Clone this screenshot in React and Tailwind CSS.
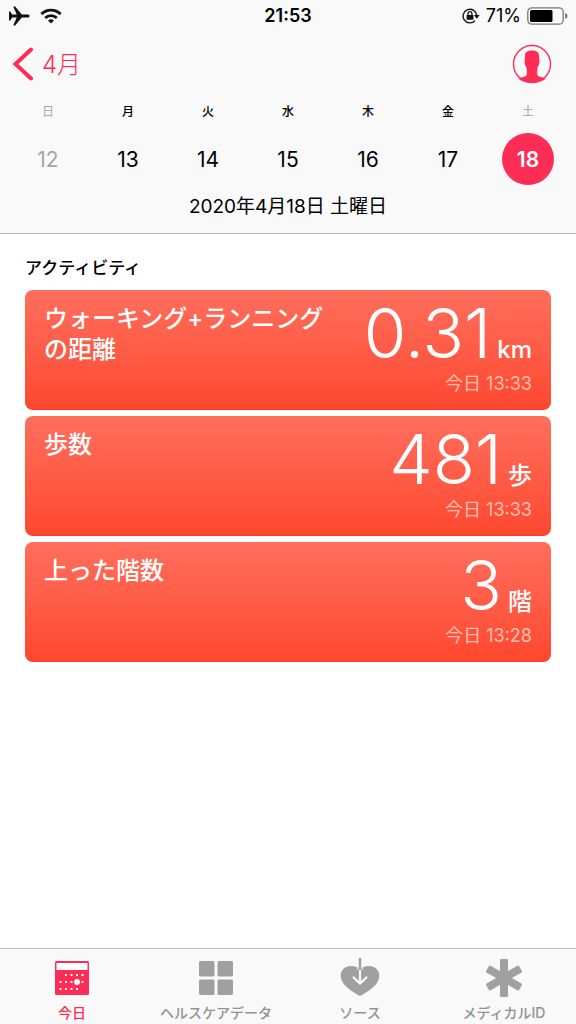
import clsx from "clsx";

const days = [
  { name: "日", date: 12, weekend: true },
  { name: "月", date: 13 },
  { name: "火", date: 14 },
  { name: "水", date: 15 },
  { name: "木", date: 16 },
  { name: "金", date: 17 },
  { name: "土", date: 18, weekend: true, selected: true },
];

const activities = [
  { title: "ウォーキング+ランニングの距離", value: "0.31", unit: "km", time: "今日 13:33" },
  { title: "歩数", value: "481", unit: "歩", time: "今日 13:33" },
  { title: "上った階数", value: "3", unit: "階", time: "今日 13:28" },
];

const tabs = [
  { label: "今日", icon: CalendarIcon, active: true },
  { label: "ヘルスケアデータ", icon: GridIcon },
  { label: "ソース", icon: SourceIcon },
  { label: "メディカルID", icon: AsteriskIcon },
];

function AirplaneIcon() {
  return (
    <svg width="22" height="20" viewBox="0 0 22 20" aria-hidden="true">
      <path
        fill="#111"
        d="M1 5.5h1.2l2 2.900h4.500L5.200.5h1.900l6.700 7.900h6c1 0 1.800.8 1.800 1.600s-.8 1.600-1.800 1.600h-6l-6.700 7.900H5.200l3.500-7.900H4.200l-2 2.900H1z"
      />
    </svg>
  );
}

function WifiIcon() {
  return (
    <svg width="22" height="16" viewBox="0 0 22 16" fill="none" stroke="#111" strokeWidth="2.900" aria-hidden="true">
      <path d="M1.400 6.100a13.600 13.600 0 0 1 19.200 0" />
      <path d="M5.200 10a8.200 8.200 0 0 1 11.600 0" />
      <path d="M11 15.600 8 12.600a4.300 4.300 0 0 1 6 0z" fill="#111" stroke="none" />
    </svg>
  );
}

function RotationLockIcon() {
  return (
    <svg width="18" height="16" viewBox="0 0 18 16" fill="none" stroke="#111" strokeWidth="1.400" aria-hidden="true">
      <path d="M13 12.600A6.800 6.800 0 1 1 14.700 7.600" />
      <path d="M12 7h5.600l-2.800 3.800z" fill="#111" stroke="none" />
      <rect x="4.600" y="7" width="6.800" height="4.800" rx=".6" fill="#111" stroke="none" />
      <path d="M6.100 7.400V5.600a1.900 1.900 0 0 1 3.800 0v1.800" strokeWidth="1.300" />
    </svg>
  );
}

function BatteryIcon() {
  return (
    <svg width="41" height="18" viewBox="0 0 41 18" aria-hidden="true">
      <rect x=".8" y=".8" width="35.400" height="16.400" rx="4" fill="none" stroke="#777" strokeWidth="1.300" />
      <rect x="3" y="3" width="22.500" height="12" rx="1.500" fill="#000" />
      <path d="M38.200 6c1.500.5 2.300 1.600 2.300 3s-.8 2.500-2.300 3z" fill="#777" />
    </svg>
  );
}

function ProfileIcon() {
  return (
    <svg width="40" height="40" viewBox="0 0 40 40" aria-hidden="true">
      <circle cx="20" cy="20" r="18.500" fill="none" stroke="#ff2d55" strokeWidth="1.400" />
      <path
        fill="#ff2d55"
        d="M20 6.500c4.500 0 7 1.500 7 5 0 2 .4 4 .4 6 0 2-.5 3.500-1.200 4.700-.6 1.100-1 2.200-1 3.300v4.500c0 1.800 1.500 2.600 3.800 3.100 1.800.4 3.400.8 4.700 1.600C30.400 37.200 25.400 39 20 39S9.600 37.200 6.300 34.700c1.300-.8 2.900-1.200 4.700-1.600 2.300-.5 3.800-1.300 3.800-3.100v-4.500c0-1.100-.4-2.200-1-3.300-.7-1.200-1.200-2.700-1.200-4.700 0-2 .4-4 .4-6 0-3.500 2.500-5 7-5z"
      />
    </svg>
  );
}

function CalendarIcon() {
  return (
    <svg width="34" height="38" viewBox="0 0 34 38" aria-hidden="true">
      <rect x="0" y="2" width="34" height="34" rx="1.500" fill="#ff2d55" />
      <rect x="1.500" y="4" width="31" height="7" fill="#fff" />
      <g fill="#fff">
        {[11, 16.5, 22, 27.5].map((x) => <rect key={x} x={x - 1} y="15" width="2" height="2" />)}
        {[5.5, 11, 16.5, 27.5].map((x) => <rect key={x} x={x - 1} y="22" width="2" height="2" />)}
        {[5.5, 11, 16.5, 22].map((x) => <rect key={x} x={x - 1} y="29" width="2" height="2" />)}
        <circle cx="22" cy="23" r="2.900" />
      </g>
    </svg>
  );
}

function GridIcon() {
  return (
    <svg width="34" height="38" viewBox="0 0 34 38" fill="#a0a0a0" aria-hidden="true">
      <rect x="0" y="2" width="15.500" height="15.500" rx="1.500" />
      <rect x="18.500" y="2" width="15.500" height="15.500" rx="1.500" />
      <rect x="0" y="20.500" width="15.500" height="15.500" rx="1.500" />
      <rect x="18.500" y="20.500" width="15.500" height="15.500" rx="1.500" />
    </svg>
  );
}

function SourceIcon() {
  return (
    <svg width="40" height="40" viewBox="0 0 40 40" fill="none" aria-hidden="true">
      <path
        fill="#a0a0a0"
        d="M20 11.500C17.500 9 14.500 8 11 8 5 8 .7 12.200.7 17.700c0 4.300 2.300 8 6 11.400C10.800 32.800 15.500 36 20 38c4.500-2 9.200-5.200 13.300-8.900 3.700-3.400 6-7.100 6-11.400C39.300 12.200 35 8 29 8c-3.500 0-6.500 1-9 3.500z"
      />
      <path d="M20 12v13M13 18.700l7 7 7-7" stroke="#f9f9f9" strokeWidth="2.200" />
      <path d="M18 7v5M22 7v5" stroke="#f9f9f9" strokeWidth="1" />
      <path d="M20 0v12" stroke="#a0a0a0" strokeWidth="2.500" />
    </svg>
  );
}

function AsteriskIcon() {
  return (
    <svg width="38" height="40" viewBox="0 0 38 40" fill="#a0a0a0" aria-hidden="true">
      <rect x="15" y="1" width="8" height="38" rx="1.200" />
      <rect x="15" y="1" width="8" height="38" rx="1.200" transform="rotate(60 19 20)" />
      <rect x="15" y="1" width="8" height="38" rx="1.200" transform="rotate(-60 19 20)" />
    </svg>
  );
}

function StatusBar() {
  return (
    <div className="grid h-8 grid-cols-3 items-center px-2">
      <div className="flex items-center gap-2.5">
        <AirplaneIcon />
        <WifiIcon />
      </div>
      <time className="text-center text-lg leading-none font-semibold">21:53</time>
      <div className="flex items-center justify-end">
        <RotationLockIcon />
        <span className="mx-1.5 text-lg leading-none">71%</span>
        <BatteryIcon />
      </div>
    </div>
  );
}

function ActivityCard({ title, value, unit, time }) {
  return (
    <li className="flex h-30 justify-between rounded-lg border-b border-[#ff3a22] bg-linear-to-b from-[#ff6e5c] to-[#ff472e] px-[19px] text-white">
      <h3 className="max-w-72 pt-[13px] text-2xl leading-[31px] font-medium">{title}</h3>
      <div className="text-right">
        <p className="flex h-[82px] items-baseline justify-end gap-1.5 whitespace-nowrap">
          <span className="text-[69px] leading-[86px] font-light">{value}</span>
          <span className="text-2xl font-medium">{unit}</span>
        </p>
        <p className="text-lg leading-6 text-[#ffc0b2]">{time}</p>
      </div>
    </li>
  );
}

export default function App() {
  return (
    <div className="flex min-h-screen flex-col bg-white font-['Inter','Noto_Sans_CJK_JP',sans-serif] text-black" lang="ja">
      <header className="border-b border-[#b8b8b8] bg-[#f9f9f9] pb-3">
        <StatusBar />

        <nav className="flex h-16 items-center justify-between pr-6 pl-3">
          <button className="flex items-center gap-2 text-2xl font-light text-[#ff2d55]">
            <svg width="22" height="34" viewBox="0 0 22 34" fill="none" aria-hidden="true">
              <path d="M19 2.500 3.500 17 19 31.500" stroke="#ff2d55" strokeWidth="4" strokeLinecap="round" />
            </svg>
            <span className="pt-0.5">4月</span>
          </button>
          <button aria-label="プロフィール">
            <ProfileIcon />
          </button>
        </nav>

        <div className="grid grid-cols-7 px-2">
          {days.map((d) => (
            <button key={d.date} className="flex flex-col items-center">
              <span className={clsx("flex h-8 items-center text-xs", d.weekend ? "text-[#a5a5a5]" : "font-medium")}>
                {d.name}
              </span>
              <span
                className={clsx(
                  "mt-[5px] flex size-[52px] items-center justify-center rounded-full pt-px text-[21px]",
                  d.selected ? "bg-[#ff2d55] font-semibold text-white" : d.weekend && "text-[#a5a5a5]"
                )}
              >
                {d.date}
              </span>
            </button>
          ))}
        </div>

        <p className="mt-2 text-center text-[19px] leading-7">2020年4月18日 土曜日</p>
      </header>

      <main className="flex-1 px-[25px] pt-5">
        <h2 className="mb-2 text-[17px] leading-7 font-medium">アクティビティ</h2>
        <ul className="flex flex-col gap-1.5">
          {activities.map((a) => (
            <ActivityCard key={a.title} {...a} />
          ))}
        </ul>
      </main>

      <nav className="grid h-[76px] grid-cols-4 border-t border-[#b8b8b8] bg-[#f9f9f9]">
        {tabs.map(({ label, icon: Icon, active }) => (
          <button
            key={label}
            className={clsx("flex flex-col items-center text-sm font-medium", active ? "text-[#ff2d55]" : "text-[#929292]")}
          >
            <span className="flex h-[58px] items-center">
              <Icon />
            </span>
            <span className="leading-3">{label}</span>
          </button>
        ))}
      </nav>
    </div>
  );
}
